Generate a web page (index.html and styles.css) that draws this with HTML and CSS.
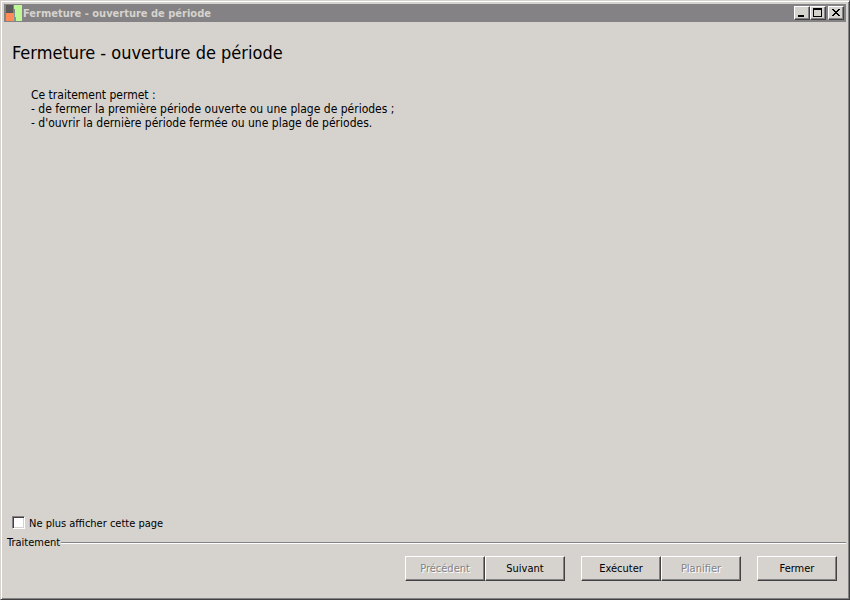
FILE: index.html
```html
<!DOCTYPE html>
<html lang="fr">
<head>
<meta charset="utf-8">
<title>Fermeture - ouverture de période</title>
<link rel="stylesheet" href="styles.css">
</head>
<body>
<div class="window">
  <header class="titlebar">
    <svg class="app-icon" width="18" height="18" viewBox="0 0 18 18" shape-rendering="crispEdges" aria-hidden="true">
      <rect x="2" y="1" width="7" height="8" fill="#5c5a58"/>
      <rect x="2" y="9" width="8" height="8" fill="#ff8c57"/>
      <path d="M10 1h8v16h-6z" fill="#bdf796"/>
      <path d="M10 9h1v4h1v4h-2z" fill="#7a9a9c"/>
    </svg>
    <span class="caption">Fermeture - ouverture de période</span>
    <div class="window-controls">
      <button type="button" class="control" aria-label="Réduire">
        <svg width="12" height="10" viewBox="0 0 12 10" shape-rendering="crispEdges"><path d="M2 7h6v2H2z"/></svg>
      </button>
      <button type="button" class="control" aria-label="Agrandir">
        <svg width="12" height="10" viewBox="0 0 12 10" shape-rendering="crispEdges"><path fill-rule="evenodd" d="M1 0h9v9H1zM2 2v6h7V2z"/></svg>
      </button>
      <button type="button" class="control control-close" aria-label="Fermer la fenêtre">
        <svg width="12" height="10" viewBox="0 0 12 10" shape-rendering="crispEdges"><path d="M2 1h2v1h1v1h2V2h1V1h2v1H9v1H8v1H7v1h1v1h1v1h1v1H8V7H7V6H5v1H4v1H2V7h1V6h1V5h1V4H4V3H3V2H2z"/></svg>
      </button>
    </div>
  </header>
  <main class="content">
    <h1 class="heading">Fermeture - ouverture de période</h1>
    <div class="description">
      <p>Ce traitement permet :</p>
      <p>- de fermer la première période ouverte ou une plage de périodes ;</p>
      <p>- d'ouvrir la dernière période fermée ou une plage de périodes.</p>
    </div>
    <label class="skip-option"><input type="checkbox" class="checkbox"> Ne plus afficher cette page</label>
  </main>
  <fieldset class="actions">
    <legend>Traitement</legend>
    <div class="button-row">
      <div class="button-group">
        <button type="button" class="button" disabled>Précédent</button>
        <button type="button" class="button">Suivant</button>
      </div>
      <div class="button-group">
        <button type="button" class="button">Exécuter</button>
        <button type="button" class="button" disabled>Planifier</button>
      </div>
      <button type="button" class="button">Fermer</button>
    </div>
  </fieldset>
</div>
</body>
</html>
```
FILE: styles.css
```css
* {
  box-sizing: border-box;
}

body {
  margin: 0;
  background: #d6d3ce;
  color: #000;
  font-family: "DejaVu Sans Condensed", "DejaVu Sans", sans-serif;
  font-size: 11px;
}

.window {
  display: flex;
  flex-direction: column;
  min-height: 100vh;
  padding: 2px;
  border: 1px solid;
  border-color: #d6d3ce #424142 #424142 #d6d3ce;
  box-shadow: inset 1px 1px #fff, inset -1px -1px #848284;
}

.titlebar {
  display: flex;
  align-items: center;
  height: 18px;
  margin: 1px;
  padding-right: 2px;
  background: #848284;
}

.app-icon {
  flex: none;
}

.caption {
  flex: 1;
  padding-left: 1px;
  color: #d6d3ce;
  font-size: 11px;
  font-weight: bold;
  white-space: nowrap;
}

.window-controls {
  display: flex;
}

.control,
.button {
  border: 1px solid;
  border-color: #fff #424142 #424142 #fff;
  background: #d6d3ce;
  box-shadow: inset -1px -1px #848284;
  color: #000;
  font: inherit;
}

.control {
  display: flex;
  width: 16px;
  height: 14px;
  padding: 1px;
}

.control-close {
  margin-left: 2px;
}

.content {
  display: flex;
  flex: 1;
  flex-direction: column;
  padding: 19px 9px 2px;
}

.heading {
  margin: 0;
  font-size: 18px;
  font-weight: normal;
  line-height: 22px;
}

.description {
  margin: 24px 0 0 19px;
  font-size: 12px;
  line-height: 14px;
}

.description p {
  margin: 0;
}

.skip-option {
  display: flex;
  align-items: flex-start;
  align-self: flex-start;
  gap: 4px;
  margin-top: auto;
  line-height: 16px;
}

.checkbox {
  width: 13px;
  height: 13px;
  margin: 0;
  appearance: none;
  border: 1px solid;
  border-color: #848284 #fff #fff #848284;
  background: #fff;
  box-shadow: inset 1px 1px #424142, inset -1px -1px #d6d3ce;
}

.checkbox:checked {
  background: #424142;
}

.actions {
  min-width: 0;
  margin: 0 1px;
  padding: 6px 9px 16px 0;
  border: 0 solid #848284;
  border-top-width: 1px;
  box-shadow: inset 0 1px #fff;
}

.actions legend {
  padding: 2px 1px 0 3px;
  background: #d6d3ce;
  line-height: 14px;
}

.button-row {
  display: flex;
  flex-wrap: wrap;
  justify-content: flex-end;
  gap: 16px;
}

.button-group {
  display: flex;
}

.button {
  width: 80px;
  height: 25px;
  padding: 0;
}

.button:disabled {
  color: #848284;
  text-shadow: 1px 1px #fff;
}
```
